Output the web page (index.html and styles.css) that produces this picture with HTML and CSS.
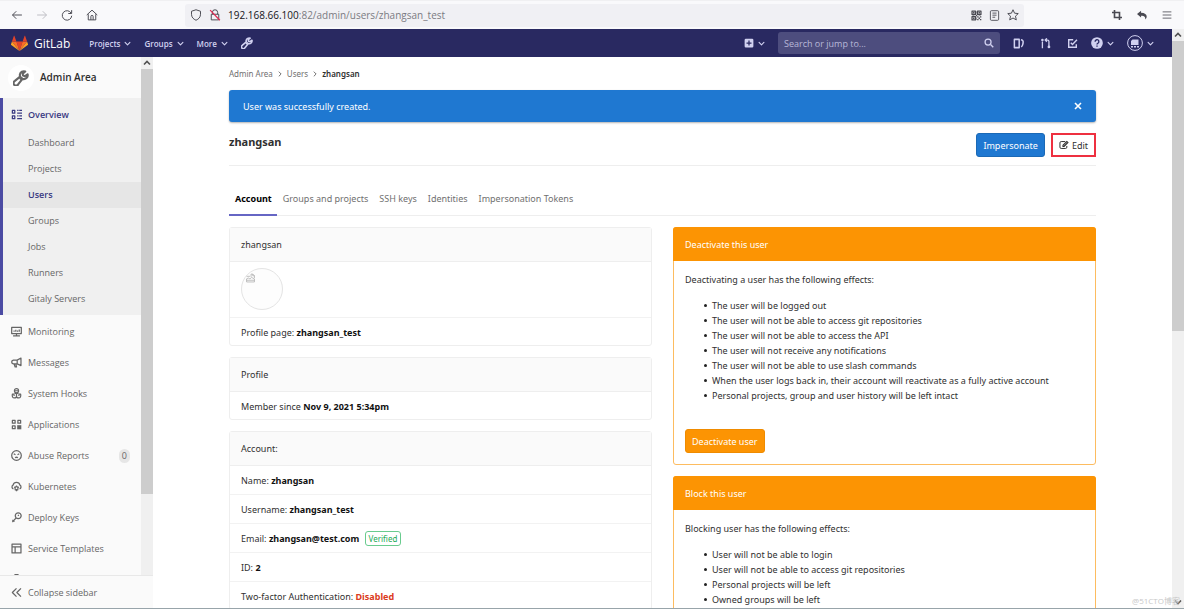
FILE: index.html
```html
<!DOCTYPE html>
<html lang="en">
<head>
<meta charset="utf-8">
<title>zhangsan · Users · GitLab</title>
<link rel="stylesheet" href="styles.css">
</head>
<body>
<svg class="defs" aria-hidden="true">
  <symbol id="chev" viewBox="0 0 16 16"><path d="M2.500 5.500 8 11l5.500-5.500" fill="none" stroke="currentColor" stroke-width="2.600" stroke-linecap="round" stroke-linejoin="round"/></symbol>
  <symbol id="wrench" viewBox="0 0 16 16"><path d="M14.600 4.300 12 6.200 10 5.600 9.700 3.700 12.200 1.500C10 .7 7.300 2 6.900 4.500c-.1.900 0 1.500.2 2.100L1.900 10.900a2.500 2.500 0 1 0 3.400 3.300l4.200-5.300c3.200.9 5.800-1.700 5.100-4.600z" fill="none" stroke="currentColor" stroke-width="2.100" stroke-linejoin="round"/><path d="M9 7 7 9.500" stroke="currentColor" stroke-width="2.500"/></symbol>
</svg>

<header class="toolbar">
  <div class="tools">
    <button class="tool" aria-label="Back"><svg viewBox="0 0 16 16"><path d="M14.500 8H2M7 3 2 8l5 5" class="line"/></svg></button>
    <button class="tool off" aria-label="Forward"><svg viewBox="0 0 16 16"><path d="M1.500 8H14M9 3l5 5-5 5" class="line"/></svg></button>
    <button class="tool" aria-label="Reload"><svg viewBox="0 0 16 16"><path d="M13.500 5.500A6.300 6.300 0 1 0 14.300 9M14.200 1.500v4.500H9.700" class="line"/></svg></button>
    <button class="tool" aria-label="Home"><svg viewBox="0 0 16 16"><path d="M1 8 8 1.500 15 8M3 7v7.500h10V7M6.500 14.500V10a1.500 1.500 0 0 1 3 0v4.500" class="line"/></svg></button>
  </div>
  <div class="address">
    <svg class="i12" viewBox="0 0 16 16"><path d="M8 1 14 3v4c0 4-2.500 6.500-6 8-3.500-1.500-6-4-6-8V3z" class="line"/></svg>
    <svg class="i12" viewBox="0 0 16 16"><path d="M4.500 7V4.500a3.500 3.500 0 0 1 7 0V7M3 7h10v7.500H3z" class="line"/><path d="M1.500 1.500 14.500 15" stroke="#e22850" stroke-width="1.600"/></svg>
    <div class="url"><b>192.168.66.100</b>:82/admin/users/zhangsan_test</div>
    <svg class="i11" viewBox="0 0 16 16"><path d="M1.500 1.500h5v5h-5zM9.500 1.500h5v5h-5zM1.500 9.500h5v5h-5z" class="thick"/><path d="M3 3h2v2H3zM11 3h2v2h-2zM3 11h2v2H3zM7 7h2v2H7zM9 9h2v2H9zM13 9h2v2h-2zM11 11h2v2h-2zM9 13h2v2H9zM13 13h2v2h-2zM7 2h1v3H7zM2 7h3v1H2zM11 7h3v1h-3zM7 11h1v3H7z"/></svg>
    <svg class="i11" viewBox="0 0 16 16"><rect x="2" y="1" width="12" height="14" rx="1.500" class="line"/><path d="M5 4.500h6M5 7.500h6M5 10.500h4" class="line"/></svg>
    <svg class="i12" viewBox="0 0 16 16"><path d="m8 1 2.100 4.600 4.900.5-3.700 3.400 1.100 5L8 12l-4.400 2.500 1.100-5L1 6.100l4.900-.5z" class="line"/></svg>
  </div>
  <div class="tools end">
    <button class="tool sm" aria-label="Screenshot"><svg viewBox="0 0 16 16"><path d="M4 0v12h12M0 4h12v12" fill="none" stroke="currentColor" stroke-width="2.600"/></svg></button>
    <button class="tool sm" aria-label="Undo"><svg viewBox="0 0 16 16"><path d="M0 6.500 6.500 1v3.500c6 0 9 3 9 6 0 2-1 3.500-2.500 4.500.7-4-1-6-6.500-6V12z"/></svg></button>
    <button class="tool sm" aria-label="Menu"><svg viewBox="0 0 16 16"><path d="M1 3h14M1 8h14M1 13h14" class="line"/></svg></button>
  </div>
</header>

<div class="viewport">
  <div class="page">
    <nav class="navbar">
      <a class="brand" href="#"><svg viewBox="0 0 36 36"><path fill="#e24329" d="m18 34 6.600-20.400H11.400z"/><path fill="#fc6d26" d="M18 34 11.400 13.600H2z"/><path fill="#fca326" d="M2 13.600 0 19.800a1.500 1.500 0 0 0 .5 1.500L18 34z"/><path fill="#e24329" d="M2 13.600h9.400L7.300 2c-.2-.7-1.100-.7-1.300 0z"/><path fill="#fc6d26" d="m18 34 6.600-20.400H34z"/><path fill="#fca326" d="m34 13.600 2 6.200a1.500 1.500 0 0 1-.5 1.500L18 34z"/><path fill="#e24329" d="M34 13.600h-9.400L28.700 2c.2-.7 1.100-.7 1.300 0z"/></svg><span>GitLab</span></a>
      <div class="navmenu">
        <button class="navitem">Projects<svg class="i7"><use href="#chev"/></svg></button>
        <button class="navitem">Groups<svg class="i7"><use href="#chev"/></svg></button>
        <button class="navitem">More<svg class="i7"><use href="#chev"/></svg></button>
        <a class="navicon" href="#" aria-label="Admin area"><svg class="i12"><use href="#wrench"/></svg></a>
      </div>
      <div class="navright">
        <button class="navitem" aria-label="New"><svg class="i10" viewBox="0 0 16 16"><path fill-rule="evenodd" d="M3 1h10a2 2 0 0 1 2 2v10a2 2 0 0 1-2 2H3a2 2 0 0 1-2-2V3a2 2 0 0 1 2-2zm4 3v3H4v2h3v3h2V9h3V7H9V4z"/></svg><svg class="i7"><use href="#chev"/></svg></button>
        <label class="search"><input type="text" placeholder="Search or jump to..." aria-label="Search"><svg class="i10" viewBox="0 0 16 16"><circle cx="6.500" cy="6.500" r="4.800" fill="none" stroke="currentColor" stroke-width="2"/><path d="m10.500 10.500 4.300 4.300" stroke="currentColor" stroke-width="2.200"/></svg></label>
        <div class="navlinks">
          <a class="navicon" href="#" aria-label="Issues"><svg class="i11" viewBox="0 0 16 16"><path d="M2 2h7v12H2zM11.500 2.500c3.500.5 3.500 3 3 5.500s-.5 4-2.500 5" fill="none" stroke="currentColor" stroke-width="2.200" stroke-linejoin="round"/></svg></a>
          <a class="navicon" href="#" aria-label="Merge requests"><svg class="i11" viewBox="0 0 16 16"><path d="M3.500 5v10M8 3h3q2 0 2 2v7M10 .5 7.500 3 10 5.500" fill="none" stroke="currentColor" stroke-width="1.900"/><circle cx="3.500" cy="3" r="1.900"/><circle cx="13" cy="13" r="2"/></svg></a>
          <a class="navicon" href="#" aria-label="To-Do List"><svg class="i11" viewBox="0 0 16 16"><path d="M9 2.500H2.500v11h11V9M5.500 7 8 9.500 14.500 2.500" fill="none" stroke="currentColor" stroke-width="2.100"/></svg></a>
        </div>
        <div class="navuser">
          <button class="navitem" aria-label="Help"><svg class="i12" viewBox="0 0 16 16"><circle cx="8" cy="8" r="7.800"/><path d="M5.500 6.300a2.500 2.500 0 1 1 3.500 2.100q-1 .4-1 1.500M8 11.200v1.800" fill="none" stroke="#292961" stroke-width="1.800"/></svg><svg class="i7"><use href="#chev"/></svg></button>
          <button class="navitem" aria-label="Account menu"><svg class="i16" viewBox="0 0 16 16"><circle cx="8" cy="8" r="7.400" fill="none" stroke="currentColor"/><path d="M5.500 4.500h6v5.500H4V6zM4 11h2v1.500H4zM7 11h2v1.500H7zM10 11h2v1.500h-2z"/></svg><svg class="i7"><use href="#chev"/></svg></button>
        </div>
      </div>
    </nav>

    <div class="body">
      <aside class="sidebar">
        <div class="sidescroll">
          <div class="menu">
            <a class="context" href="#"><span class="disc"><svg><use href="#wrench"/></svg></span>Admin Area</a>
            <div class="group">
              <a class="item current" href="#"><svg viewBox="0 0 16 16"><path d="M2 2h3.500v4H2zM2 10h3.500v4H2z" class="thick"/><path d="M9 1h2v2H9zM12 1h4v2h-4zM9 5h7v2H9zM9 9h2v2H9zM12 9h4v2h-4zM9 13h7v2H9z"/></svg>Overview</a>
              <ul class="sub">
                <li><a href="#">Dashboard</a></li>
                <li><a href="#">Projects</a></li>
                <li><a class="on" href="#">Users</a></li>
                <li><a href="#">Groups</a></li>
                <li><a href="#">Jobs</a></li>
                <li><a href="#">Runners</a></li>
                <li><a href="#">Gitaly Servers</a></li>
              </ul>
            </div>
            <a class="item" href="#"><svg viewBox="0 0 16 16"><path d="M1 2h14v9H1zM3 14.500h10M8 11v3M4.500 8.500v-2M7 8.500v-3M9.500 8.500v-2M12 8.500V5" class="thick"/></svg>Monitoring</a>
            <a class="item" href="#"><svg viewBox="0 0 16 16"><path d="M14.500 1.500v11L9 10H3.500Q1 9.500 1 7.200T3.500 4.500H9zM9 4.500V10M4.500 10l1.500 4.500h2L7 10" class="thick"/></svg>Messages</a>
            <a class="item" href="#"><svg viewBox="0 0 16 16"><circle cx="8" cy="4" r="3" class="thick"/><path d="M5.500 4h5M8 7v7.500M4.500 9H2Q1 14.500 5 14.500 8 14.500 8 12q0 2.500 3 2.500 4 0 3-5.500h-2.500M4.500 9v2.500M11.500 9v2.500M5 8h6" class="thick"/></svg>System Hooks</a>
            <a class="item" href="#"><svg viewBox="0 0 16 16"><path d="M2 2h4v4H2zM10 2h4v4h-4zM2 10h4v4H2z" class="thick"/><path d="M9 9h6v6H9z"/></svg>Applications</a>
            <a class="item" href="#"><svg viewBox="0 0 16 16"><circle cx="8" cy="8" r="7" class="thick"/><path d="M4 5.500 6.500 7M12 5.500 9.500 7M6 11.500q2-2 4 0" class="thick"/></svg>Abuse Reports<span class="count">0</span></a>
            <a class="item" href="#"><svg viewBox="0 0 16 16"><path d="M3.500 11.500A3 3 0 0 1 3 6q1-4 5-4t5 4a3 3 0 0 1-.5 5.500" class="thick"/><circle cx="8" cy="10.500" r="2.200" class="thick"/><path d="M8 6.500V8M8 13v2M4.500 8.800 6 9.500M11.500 8.800 10 9.500M5.500 13.500l1-1M10.500 13.500l-1-1" class="thick"/></svg>Kubernetes</a>
            <a class="item" href="#"><svg viewBox="0 0 16 16"><circle cx="10.500" cy="5.500" r="4.300" class="thick"/><path d="m7.500 8.500-5.500 6M2 11.500l3 2.500M10 5.500l1.500-1" class="thick"/></svg>Deploy Keys</a>
            <a class="item" href="#"><svg viewBox="0 0 16 16"><path d="M1.500 1.500h13v13h-13zM1.500 5.500h13M6 5.500v9" class="thick"/></svg>Service Templates</a>
            <a class="item" href="#" aria-label="Labels"><svg viewBox="0 0 16 16"><path d="M5 1h6M2 4h12v10H2z" class="thick"/></svg></a>
          </div>
          <div class="scrollbar"><svg viewBox="0 0 12 12"><path d="m3 7.500 3-3 3 3" class="arrow"/></svg><div class="thumb side"></div></div>
        </div>
        <button class="collapse"><svg viewBox="0 0 16 16"><path d="M8 2 2 8l6 6M14.500 2l-6 6 6 6" class="thick"/></svg>Collapse sidebar</button>
      </aside>

      <main class="main">
        <div class="container">
          <nav class="crumbs"><a href="#">Admin Area</a><svg><use href="#chev"/></svg><a href="#">Users</a><svg><use href="#chev"/></svg><b>zhangsan</b></nav>
          <div class="alert"><span>User was successfully created.</span><button aria-label="Dismiss"><svg viewBox="0 0 8 8"><path d="m1 1 6 6M7 1 1 7" stroke="currentColor" stroke-width="1.600"/></svg></button></div>
          <div class="head">
            <h1>zhangsan</h1>
            <div class="actions">
              <a class="btn blue" href="#">Impersonate</a>
              <a class="btn edit" href="#"><svg viewBox="0 0 16 16"><path d="M10 2.500H3.500Q1.500 2.500 1.500 4.500v7q0 2 2 2h7q2 0 2-2V9.500" fill="none" stroke="currentColor" stroke-width="1.600"/><path d="M5.500 11V8L12.500 1l3 3-7 7z"/><path d="m7.200 9.200 5.600-5.600" stroke="#fff" stroke-width=".8"/></svg>Edit</a>
            </div>
          </div>
          <nav class="tabs">
            <a class="active" href="#">Account</a><a href="#">Groups and projects</a><a href="#">SSH keys</a><a href="#">Identities</a><a href="#">Impersonation Tokens</a>
          </nav>
          <div class="columns">
            <div class="column">
              <section class="card">
                <h2>zhangsan</h2>
                <div class="picture"><span class="avatar"><svg viewBox="0 0 16 16"><path d="M1 9.500 4 8l3 1.500L10 7l5 2.500V15H1zM1 12h14M9 1h3l3 3v4M9 1v5M12 1v3h3M1 5h6" fill="none" stroke="#aaa" stroke-width="1.300"/></svg></span></div>
                <p>Profile page: <a href="#">zhangsan_test</a></p>
              </section>
              <section class="card">
                <h2>Profile</h2>
                <p>Member since <b>Nov 9, 2021 5:34pm</b></p>
              </section>
              <section class="card">
                <h2>Account:</h2>
                <p>Name: <b>zhangsan</b></p>
                <p>Username: <b>zhangsan_test</b></p>
                <p>Email: <b>zhangsan@test.com</b> <span class="verified">Verified</span></p>
                <p>ID: <b>2</b></p>
                <p>Two-factor Authentication: <b class="red">Disabled</b></p>
              </section>
            </div>
            <div class="column">
              <section class="card warn">
                <h2>Deactivate this user</h2>
                <div class="content">
                  <div>Deactivating a user has the following effects:</div>
                  <ul>
                    <li>The user will be logged out</li>
                    <li>The user will not be able to access git repositories</li>
                    <li>The user will not be able to access the API</li>
                    <li>The user will not receive any notifications</li>
                    <li>The user will not be able to use slash commands</li>
                    <li>When the user logs back in, their account will reactivate as a fully active account</li>
                    <li>Personal projects, group and user history will be left intact</li>
                  </ul>
                  <button class="btn orange">Deactivate user</button>
                </div>
              </section>
              <section class="card warn">
                <h2>Block this user</h2>
                <div class="content">
                  <div>Blocking user has the following effects:</div>
                  <ul>
                    <li>User will not be able to login</li>
                    <li>User will not be able to access git repositories</li>
                    <li>Personal projects will be left</li>
                    <li>Owned groups will be left</li>
                  </ul>
                </div>
              </section>
            </div>
          </div>
        </div>
      </main>
    </div>
  </div>
  <div class="scrollbar"><svg viewBox="0 0 12 12"><path d="m3 7.500 3-3 3 3" class="arrow"/></svg><div class="thumb"></div><svg class="last" viewBox="0 0 12 12"><path d="m3 4.500 3 3 3-3" class="arrow"/></svg></div>
  <div class="watermark">@51CTO博客</div>
</div>
</body>
</html>
```

FILE: styles.css
```css
* { box-sizing: border-box; }
body {
  margin: 0;
  height: 100vh;
  display: flex;
  flex-direction: column;
  overflow: hidden;
  font: 9px/15px "Open Sans", "Noto Sans", "Noto Sans CJK SC", sans-serif;
  color: #303030;
  background: #fff;
  border-bottom: 1px solid #98a4aa;
}
a { color: inherit; text-decoration: none; }
button { font: inherit; color: inherit; background: none; border: 0; padding: 0; }
svg { display: block; flex: none; fill: currentColor; }
.defs { position: absolute; width: 0; height: 0; }
.line { fill: none; stroke: currentColor; stroke-width: 1.300; stroke-linejoin: round; }
.thick { fill: none; stroke: currentColor; stroke-width: 1.800; stroke-linejoin: round; }
.i7 { width: 7px; height: 7px; }
.i10 { width: 10px; height: 10px; }
.i11 { width: 11px; height: 11px; }
.i12 { width: 12px; height: 12px; }
.i16 { width: 16px; height: 16px; }

.toolbar {
  flex: none;
  height: 29px;
  display: flex;
  align-items: center;
  background: #f9f9fb;
  border-top: 1px solid #f0f0f2;
  color: #4a4a52;
}
.tools { width: 185px; padding-left: 11px; display: flex; gap: 13px; }
.tools.end { width: 160px; padding: 0 12px 0 0; justify-content: flex-end; gap: 15px; }
.tool { width: 12px; height: 12px; }
.tool svg { width: 100%; height: 100%; }
.tool.sm { width: 10px; height: 10px; }
.tool.off { color: #bdbdc3; }
.address {
  flex: 1;
  height: 23px;
  display: flex;
  align-items: center;
  gap: 7px;
  padding: 0 5px;
  background: #f0f0f4;
  border-radius: 3px;
}
.url { flex: 1; font-size: 10px; color: #7b7b82; }
.url b { font-weight: 400; color: #15141a; }

.viewport { position: relative; flex: 1; min-height: 0; display: flex; }
.page { flex: 1; min-width: 0; display: flex; flex-direction: column; }
.scrollbar { flex: none; width: 12px; display: flex; flex-direction: column; background: #f0f0f0; }
.scrollbar svg { width: 12px; height: 12px; }
.scrollbar .last { margin-top: auto; }
.arrow { fill: none; stroke: #505050; stroke-width: 1.600; }
.thumb { flex: 0 0 50%; background: #cdcdcd; }
.thumb.side { flex-basis: 82%; }
.watermark { position: absolute; right: 4px; bottom: 0; font-size: 8px; color: #c8c8c8; }

.navbar {
  flex: none;
  height: 28px;
  display: flex;
  align-items: center;
  padding: 0 18px 0 11px;
  background: #292961;
  color: #d1d1f0;
}
.brand { display: flex; align-items: center; gap: 6px; margin-right: 19px; color: #fff; font-size: 12px; }
.brand svg { width: 17px; height: 17px; }
.navmenu { display: flex; align-items: center; gap: 13px; }
.navitem { display: flex; align-items: center; gap: 4px; font-size: 8px; font-weight: 600; }
.navicon { display: block; }
.navright { margin-left: auto; display: flex; align-items: center; gap: 13px; }
.navlinks { display: flex; gap: 16px; }
.navuser { display: flex; align-items: center; gap: 13px; }
.search {
  width: 222px;
  height: 22px;
  display: flex;
  align-items: center;
  padding: 0 6px;
  border-radius: 3px;
  background: #4d4d7e;
}
.search input { flex: 1; min-width: 0; padding: 0; border: 0; outline: 0; background: none; font: inherit; color: #fff; }
.search input::placeholder { color: #b8b8d8; }

.body { flex: 1; min-height: 0; display: flex; }
.sidebar { flex: none; width: 153px; display: flex; flex-direction: column; background: #fafafa; color: #666; }
.sidescroll { flex: 1; min-height: 0; display: flex; overflow: hidden; }
.menu { flex: 1; min-width: 0; }
.context { height: 41px; display: flex; align-items: center; gap: 6px; padding-left: 8px; font-size: 10px; font-weight: 600; color: #2e2e2e; }
.disc { width: 26px; height: 26px; display: grid; place-items: center; border-radius: 50%; background: #fff; color: #666; }
.disc svg { width: 16px; height: 16px; }
.group { padding-bottom: 3px; margin-bottom: 1px; background: #f0f0f0; box-shadow: inset 3px 0 #4b4ba3; }
.item { height: 31px; display: flex; align-items: center; gap: 6px; padding: 0 11px; }
.item svg, .collapse svg { width: 11px; height: 11px; }
.current { height: 32px; font-weight: 600; color: #393982; }
.sub { margin: 0; padding: 0 0 0 3px; list-style: none; }
.sub a { display: block; padding-left: 25px; line-height: 26px; }
.sub .on { background: #e6e6e6; font-weight: 600; color: #393982; }
.count { margin-left: auto; padding: 0 3px; border-radius: 8px; background: #e6e6e6; line-height: 14px; }
.collapse { flex: none; height: 33px; display: flex; align-items: center; gap: 6px; padding: 0 11px; border-top: 1px solid #e8e8e8; }

.main { flex: 1; min-width: 0; overflow: hidden; font-family: "Noto Sans", "Open Sans", sans-serif; }
.container { max-width: 867px; margin: 0 auto; }
.crumbs { height: 33px; display: flex; align-items: center; gap: 4px; font-size: 8px; color: #707070; }
.crumbs svg { width: 6px; height: 6px; transform: rotate(-90deg); }
.crumbs b { font-weight: 600; color: #2e2e2e; }
.alert {
  height: 32px;
  display: flex;
  align-items: center;
  justify-content: space-between;
  padding: 0 14px;
  border-radius: 3px;
  background: #1f78d1;
  box-shadow: 0 1px 2px rgba(0, 0, 0, .3);
  color: #fff;
}
.alert svg { width: 8px; height: 8px; }
.head { height: 44px; display: flex; justify-content: space-between; padding-top: 11px; border-bottom: 1px solid #eee; }
h1 { margin: 0; font-size: 11px; line-height: 17px; font-weight: 700; }
.actions { display: flex; gap: 6px; }
.btn { height: 24px; display: flex; align-items: center; gap: 3px; padding: 0 6px; border-radius: 3px; }
.blue { background: #1f78d1; border: 1px solid #1b69b6; color: #fff; }
.edit { border: 2px solid #ee3040; border-radius: 0; }
.edit svg { width: 10px; height: 10px; }
.tabs { display: flex; margin-top: 17px; border-bottom: 1px solid #eee; color: #707070; }
.tabs a { padding: 8px 5px 8px 6px; border-bottom: 2px solid transparent; margin-bottom: -1px; }
.tabs .active { border-color: #6666c4; font-weight: 700; color: #000; }
.columns { display: grid; grid-template-columns: 1fr 1fr; gap: 21px; margin-top: 11px; }
.card { margin-bottom: 11px; border: 1px solid #eee; border-radius: 3px; }
.card h2 { margin: 0; padding: 9px 11px; border-bottom: 1px solid #eee; background: #fafafa; font-size: 9px; font-weight: 400; }
.card p { margin: 0; padding: 7px 11px 6px; border-bottom: 1px solid #f2f2f2; }
.card p:last-child { padding-bottom: 5px; border-bottom: 0; }
.card b, .card p a { font-weight: 700; color: #111; }
.card .red { color: #db3b21; }
.picture { padding: 6px 11px 7px; border-bottom: 1px solid #f2f2f2; }
.avatar { display: block; width: 42px; height: 42px; padding: 4px; border: 1px solid #e4e4e4; border-radius: 50%; background: #fdfdfd; }
.avatar svg { width: 9px; height: 10px; }
.verified { display: inline-block; margin-left: 3px; padding: 0 3px; border: 1px solid #69cb8e; border-radius: 3px; font-size: 8px; line-height: 13px; color: #1aaa55; }
.warn { border-color: #fdbc60; }
.warn .content { padding: 11px; }
.card.warn h2 { margin: -1px -1px 0; padding: 10px 12px 9px; border: 0; border-radius: 3px 3px 0 0; background: #fc9403; color: #fff; }
.content ul { margin: 11px 0 26px; padding-left: 19px; list-style: none; }
.content li { display: flex; align-items: center; gap: 5px; }
.content li::before { content: ""; width: 3px; height: 3px; border-radius: 50%; background: #222; }
.orange { background: #fc9403; border: 1px solid #ef8b00; color: #fff; }
```
